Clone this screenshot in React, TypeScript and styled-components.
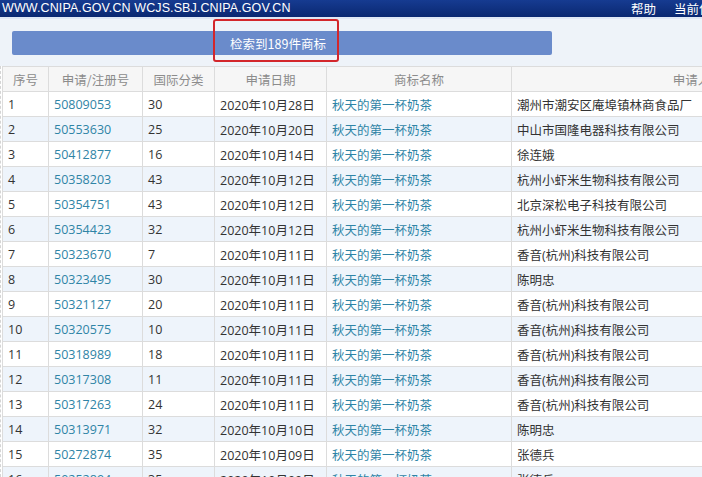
import React from "react";
import styled, { createGlobalStyle } from "styled-components";

const Global = createGlobalStyle`
  html, body { margin: 0; padding: 0; background: #fff; overflow: hidden; }
  body { font-family: "Open Sans", "Noto Sans CJK SC", sans-serif; }
`;

const Page = styled.div`
  width: 702px;
  height: 477px;
  overflow: hidden;
  background: #fff;
`;

const TopBar = styled.div`
  height: 17px;
  background: linear-gradient(#163b91, #0a2871);
  display: flex;
  align-items: center;
  justify-content: space-between;
  color: #fff;
  padding-left: 2px;
  border-bottom: 2px solid #dfe8f5;
`;

const Site = styled.div`
  font-family: "Liberation Sans", "Noto Sans", sans-serif;
  font-size: 12.5px;
  letter-spacing: 0.1px;
  line-height: 17px;
  white-space: nowrap;
`;

const TopLinks = styled.div`
  display: flex;
  gap: 18px;
  font-family: "Noto Sans CJK SC", sans-serif;
  font-size: 12.5px;
  white-space: nowrap;
  margin-right: -22px;
`;

const ResultArea = styled.div`
  position: relative;
  height: 47px;
  background: #eef3f9;
  padding: 12px 0 0 12px;
  box-sizing: border-box;
`;

const ResultBar = styled.div`
  width: 540px;
  height: 24px;
  background: #6a8bcb;
  border-radius: 2px;
  color: #fff;
  font-family: "Noto Sans CJK SC", sans-serif;
  font-size: 12.5px;
  display: flex;
  align-items: center;
  justify-content: center;
  padding-right: 8px;
  box-sizing: border-box;
`;

const Highlight = styled.div`
  position: absolute;
  left: 213px;
  top: 0px;
  width: 126px;
  height: 43px;
  border: 2px solid #d3262b;
  border-radius: 3px;
  box-sizing: border-box;
`;

const TableWrap = styled.div`
  padding-left: 1px;
  border-left: 1px dashed #d5d5d5;
`;

const Table = styled.table`
  border-collapse: collapse;
  table-layout: fixed;
  width: 894px;
  font-family: "Open Sans", "Noto Sans CJK SC", sans-serif;
  font-size: 12.5px;
`;

const Th = styled.th`
  height: 24px;
  background: #f6f6f6;
  color: #8c8c8c;
  font-weight: normal;
  text-align: center;
  border: 1px solid #dcdcdc;
  padding: 0;
  font-family: "Noto Sans CJK SC", sans-serif;
  font-size: 12.5px;
`;

const Tr = styled.tr<{ $alt: boolean }>`
  background: ${(p) => (p.$alt ? "#eef4fb" : "#fff")};
`;

const Td = styled.td<{ $link?: boolean }>`
  height: 24px;
  padding: 0 0 0 5px;
  border: 1px solid #dcdcdc;
  color: ${(p) => (p.$link ? "#2f84a6" : "#333")};
  white-space: nowrap;
  overflow: hidden;
`;

const rows: [string, string, string, string, string][] = [
  ["1", "50809053", "30", "2020年10月28日", "潮州市潮安区庵埠镇林商食品厂"],
  ["2", "50553630", "25", "2020年10月20日", "中山市国隆电器科技有限公司"],
  ["3", "50412877", "16", "2020年10月14日", "徐连娥"],
  ["4", "50358203", "43", "2020年10月12日", "杭州小虾米生物科技有限公司"],
  ["5", "50354751", "43", "2020年10月12日", "北京深松电子科技有限公司"],
  ["6", "50354423", "32", "2020年10月12日", "杭州小虾米生物科技有限公司"],
  ["7", "50323670", "7", "2020年10月11日", "香音(杭州)科技有限公司"],
  ["8", "50323495", "30", "2020年10月11日", "陈明忠"],
  ["9", "50321127", "20", "2020年10月11日", "香音(杭州)科技有限公司"],
  ["10", "50320575", "10", "2020年10月11日", "香音(杭州)科技有限公司"],
  ["11", "50318989", "18", "2020年10月11日", "香音(杭州)科技有限公司"],
  ["12", "50317308", "11", "2020年10月11日", "香音(杭州)科技有限公司"],
  ["13", "50317263", "24", "2020年10月11日", "香音(杭州)科技有限公司"],
  ["14", "50313971", "32", "2020年10月10日", "陈明忠"],
  ["15", "50272874", "35", "2020年10月09日", "张德兵"],
  ["16", "50252894", "35", "2020年10月09日", "张德兵"],
];

export default function App() {
  return (
    <Page>
      <Global />
      <TopBar>
        <Site>WWW.CNIPA.GOV.CN WCJS.SBJ.CNIPA.GOV.CN</Site>
        <TopLinks>
          <span>帮助</span>
          <span>当前位置</span>
        </TopLinks>
      </TopBar>
      <ResultArea>
        <ResultBar>检索到189件商标</ResultBar>
        <Highlight />
      </ResultArea>
      <TableWrap>
        <Table>
          <colgroup>
            <col style={{ width: 46 }} />
            <col style={{ width: 94 }} />
            <col style={{ width: 72 }} />
            <col style={{ width: 112 }} />
            <col style={{ width: 185 }} />
            <col style={{ width: 385 }} />
          </colgroup>
          <thead>
            <tr>
              <Th>序号</Th>
              <Th>申请/注册号</Th>
              <Th>国际分类</Th>
              <Th>申请日期</Th>
              <Th>商标名称</Th>
              <Th>申请人名称</Th>
            </tr>
          </thead>
          <tbody>
            {rows.map((r, i) => (
              <Tr key={r[0]} $alt={i % 2 === 1}>
                <Td>{r[0]}</Td>
                <Td $link>{r[1]}</Td>
                <Td>{r[2]}</Td>
                <Td>{r[3]}</Td>
                <Td $link>秋天的第一杯奶茶</Td>
                <Td>{r[4]}</Td>
              </Tr>
            ))}
          </tbody>
        </Table>
      </TableWrap>
    </Page>
  );
}
